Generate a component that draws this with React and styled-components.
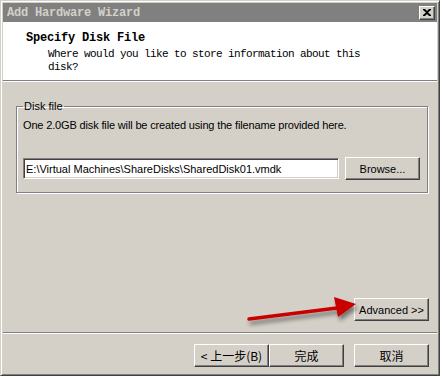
import styled, { createGlobalStyle } from 'styled-components';

const FACE = '#d4d0c8';
const SHADOW = '#808080';
const DARK = '#404040';
const UI_FONT = '"Liberation Sans", Arial, sans-serif';
const MONO_FONT = '"Liberation Mono", "Courier New", monospace';
const CJK_FONT = '"Noto Sans CJK SC", "Liberation Sans", sans-serif';

const GlobalStyle = createGlobalStyle`
  body {
    margin: 0;
    background: #fff;
  }
`;

const Window = styled.div`
  position: relative;
  box-sizing: border-box;
  width: 440px;
  height: 376px;
  padding: 2px;
  display: flex;
  flex-direction: column;
  background: ${FACE};
  border: 1px solid;
  border-color: ${FACE} ${DARK} ${DARK} ${FACE};
  box-shadow: inset 1px 1px #fff, inset -1px -1px ${SHADOW};
`;

const TitleBar = styled.div`
  height: 19px;
  display: flex;
  align-items: center;
  justify-content: space-between;
  padding: 0 2px 0 4px;
  background: ${SHADOW};
`;

const TitleText = styled.span`
  font-family: ${MONO_FONT};
  font-weight: bold;
  font-size: 12px;
  letter-spacing: -0.2px;
  color: ${FACE};
`;

const CloseButton = styled.button`
  box-sizing: border-box;
  width: 16px;
  height: 14px;
  padding: 0;
  display: flex;
  align-items: center;
  justify-content: center;
  background: ${FACE};
  border: 1px solid;
  border-color: #fff ${DARK} ${DARK} #fff;
  box-shadow: inset -1px -1px ${SHADOW};
`;

const Header = styled.div`
  box-sizing: border-box;
  height: 59px;
  padding: 10px 0 0 23px;
  background: #fff;
  border-bottom: 1px solid ${SHADOW};
  box-shadow: 0 1px #fff;
`;

const HeaderTitle = styled.div`
  font-family: ${MONO_FONT};
  font-weight: bold;
  font-size: 12px;
  line-height: 13px;
  letter-spacing: -0.2px;
  color: #000;
`;

const HeaderSub = styled.div`
  max-width: 330px;
  margin: 3px 0 0 22px;
  font-family: ${MONO_FONT};
  font-size: 11px;
  line-height: 13px;
  letter-spacing: -0.6px;
  color: #000;
`;

const Body = styled.div`
  flex: 1;
  display: flex;
  flex-direction: column;
  padding: 18px 8px 11px 13px;
  margin-top: 1px;
`;

const GroupBox = styled.fieldset`
  box-sizing: border-box;
  width: 412px;
  margin: 0;
  padding: 0 6px 12px;
  border: 1px solid ${SHADOW};
  box-shadow: inset 1px 1px #fff, 1px 1px #fff;
`;

const GroupLabel = styled.legend`
  padding: 0 1px;
  font-family: ${UI_FONT};
  font-size: 11px;
  line-height: 13px;
  color: #000;
`;

const Description = styled.p`
  margin: 6px 0 0;
  font-family: ${UI_FONT};
  font-size: 11px;
  line-height: 13px;
  letter-spacing: -0.15px;
  color: #000;
`;

const FileRow = styled.div`
  display: flex;
  align-items: center;
  gap: 6px;
  margin-top: 25px;
`;

const PathInput = styled.input`
  box-sizing: border-box;
  width: 316px;
  height: 21px;
  padding: 0 2px;
  font-family: ${UI_FONT};
  font-size: 11px;
  color: #000;
  background: #fff;
  border: 1px solid;
  border-color: ${SHADOW} #fff #fff ${SHADOW};
  box-shadow: inset 1px 1px ${DARK}, inset -1px -1px ${FACE};
  outline: none;
`;

const Button = styled.button`
  box-sizing: border-box;
  width: 75px;
  height: 23px;
  padding: 0;
  font-family: ${(p) => (p.cjk ? CJK_FONT : UI_FONT)};
  font-size: ${(p) => (p.cjk ? '12px' : '11px')};
  color: #000;
  background: ${FACE};
  border: 1px solid;
  border-color: #fff ${DARK} ${DARK} #fff;
  box-shadow: inset -1px -1px ${SHADOW};
`;

const Spacer = styled.div`
  flex: 1;
`;

const AdvancedRow = styled.div`
  display: flex;
  justify-content: flex-end;
`;

const Footer = styled.div`
  height: 41px;
  display: flex;
  align-items: flex-start;
  padding: 11px 8px 0 0;
  box-sizing: border-box;
  border-top: 1px solid ${SHADOW};
  box-shadow: inset 0 1px #fff;
`;

const NavGroup = styled.div`
  display: flex;
  margin-left: auto;
  margin-right: 10px;
`;

const Arrow = styled.svg`
  position: absolute;
  left: 240px;
  top: 292px;
  pointer-events: none;
  overflow: visible;
`;

function App() {
  return (
    <>
      <GlobalStyle />
      <Window>
        <TitleBar>
          <TitleText>Add Hardware Wizard</TitleText>
          <CloseButton aria-label="close">
            <svg width="8" height="7" viewBox="0 0 8 7">
              <path d="M0 0h2l2 2 2-2h2v1L5 3.5 8 6v1H6L4 5 2 7H0V6l3-2.5L0 1z" fill="#000" />
            </svg>
          </CloseButton>
        </TitleBar>
        <Header>
          <HeaderTitle>Specify Disk File</HeaderTitle>
          <HeaderSub>Where would you like to store information about this disk?</HeaderSub>
        </Header>
        <Body>
          <GroupBox>
            <GroupLabel>Disk file</GroupLabel>
            <Description>One 2.0GB disk file will be created using the filename provided here.</Description>
            <FileRow>
              <PathInput readOnly value="E:\Virtual Machines\ShareDisks\SharedDisk01.vmdk" />
              <Button>Browse...</Button>
            </FileRow>
          </GroupBox>
          <Spacer />
          <AdvancedRow>
            <Button>Advanced &gt;&gt;</Button>
          </AdvancedRow>
        </Body>
        <Footer>
          <NavGroup>
            <Button cjk>&lt; 上一步(B)</Button>
            <Button cjk>完成</Button>
          </NavGroup>
          <Button cjk>取消</Button>
        </Footer>
        <Arrow width="120" height="35" viewBox="0 0 120 35">
          <defs>
            <filter id="arrowShadow" x="-20%" y="-50%" width="140%" height="200%">
              <feDropShadow dx="2" dy="4" stdDeviation="2" floodColor="#000" floodOpacity="0.45" />
            </filter>
          </defs>
          <g filter="url(#arrowShadow)">
            <path d="M8 26 L96 15" stroke="#c80000" strokeWidth="3.5" strokeLinecap="round" />
            <path d="M115 11 L93 4 L97 24 Z" fill="#c80000" />
          </g>
        </Arrow>
      </Window>
    </>
  );
}

export default App;
